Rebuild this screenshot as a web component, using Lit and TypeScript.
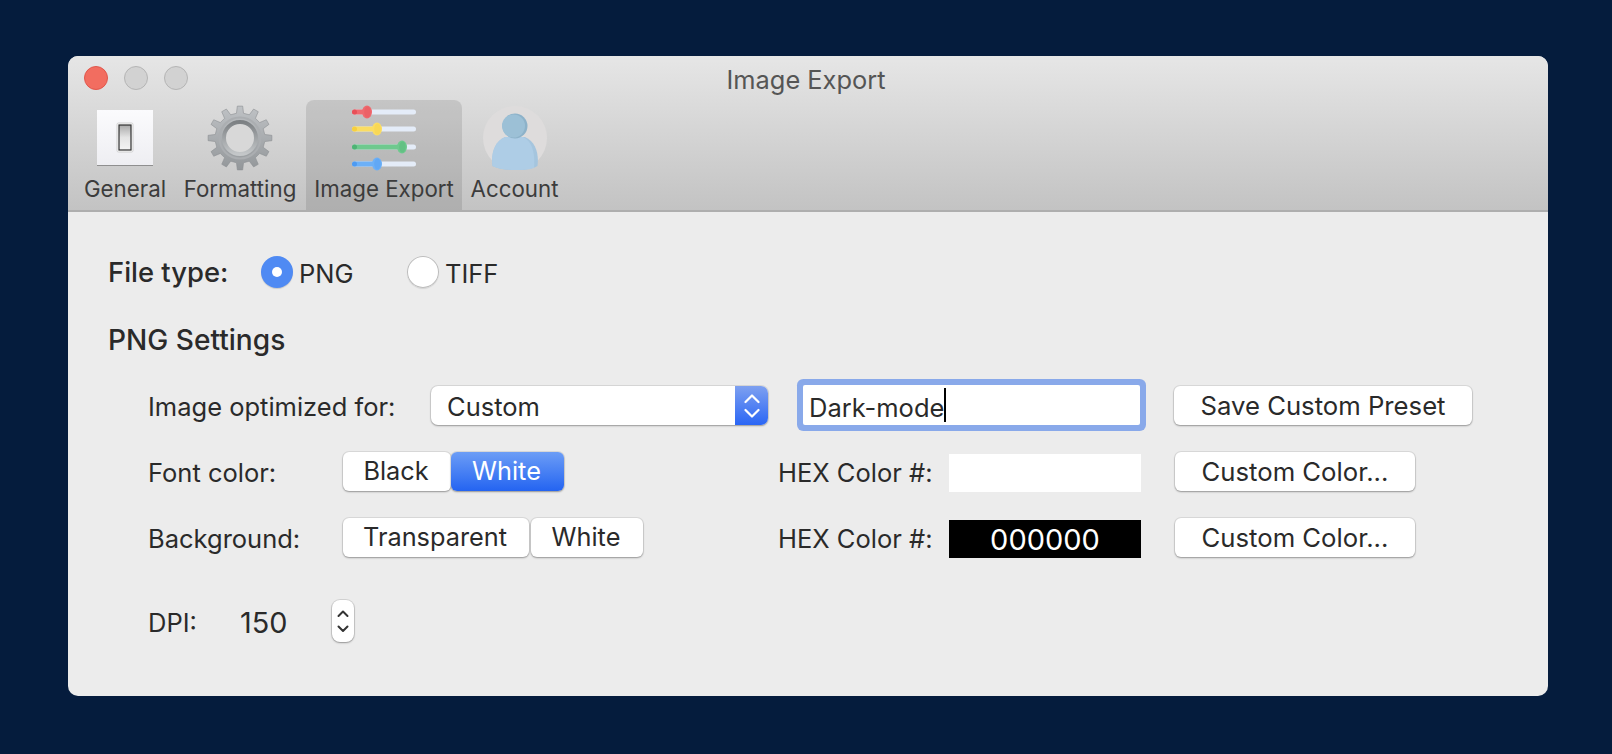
import { LitElement, html, css, svg } from "lit";
import { customElement } from "lit/decorators.js";

function gearPath(): string {
  const cx = 40, cy = 40, teeth = 12, ro = 32, ri = 25;
  const step = (Math.PI * 2) / teeth;
  const pts: string[] = [];
  for (let i = 0; i < teeth; i++) {
    const a = i * step - Math.PI / 2;
    const p = (r: number, d: number) => `${(cx + r * Math.cos(a + d)).toFixed(2)} ${(cy + r * Math.sin(a + d)).toFixed(2)}`;
    pts.push(`${i === 0 ? "M" : "L"}${p(ri, -step * 0.27)}`);
    pts.push(`L${p(ro, -step * 0.16)}`);
    pts.push(`L${p(ro, step * 0.16)}`);
    pts.push(`L${p(ri, step * 0.27)}`);
  }
  return pts.join(" ") + " Z";
}

const switchIcon = svg`<svg width="60" height="60" viewBox="0 0 60 60">
  <defs><linearGradient id="sw" x1="0" y1="0" x2="0" y2="1"><stop offset="0" stop-color="#fbfbfd"/><stop offset="1" stop-color="#eeeef2"/></linearGradient>
  <linearGradient id="swt" x1="0" y1="0" x2="0" y2="1"><stop offset="0" stop-color="#a9a9a9"/><stop offset=".5" stop-color="#e4e4e4"/><stop offset="1" stop-color="#f4f4f4"/></linearGradient></defs>
  <rect x="2" y="1" width="56" height="56" fill="#8f8f8f"/>
  <rect x="2" y="1" width="56" height="55" fill="url(#sw)"/>
  <rect x="22" y="14" width="16" height="29" rx="1.5" fill="#fbfbfb" stroke="#d0d0d0"/>
  <rect x="24" y="16" width="12" height="25" fill="url(#swt)" stroke="#2f2f2f" stroke-width="1.2"/>
</svg>`;

const gearIcon = svg`<svg width="68" height="68" viewBox="6 6 68 68">
  <defs><linearGradient id="g1" x1="0" y1="0" x2="0" y2="1"><stop offset="0" stop-color="#bfc2c5"/><stop offset="1" stop-color="#93979a"/></linearGradient>
  <linearGradient id="g2" x1="0" y1="0" x2="0" y2="1"><stop offset="0" stop-color="#7c8083"/><stop offset="1" stop-color="#c4c7c9"/></linearGradient></defs>
  <path d=${gearPath()} fill="url(#g1)" stroke="#8d9093" stroke-width=".6"/>
  <circle cx="40" cy="40" r="20.5" fill="none" stroke="#abaeb1" stroke-width="2"/>
  <circle cx="40" cy="40" r="16" fill="#d8d8d8" stroke="url(#g2)" stroke-width="4"/>
</svg>`;

const sliders: [number, number, string, string][] = [
  [8, 15, "#ef6a6f", "#e84f57"],
  [25, 25, "#fbdd62", "#f6cf3f"],
  [43, 50, "#6ec98e", "#4eb374"],
  [60, 25, "#6cb0f7", "#4e9bf2"],
];
const sliderIcon = svg`<svg width="66" height="68" viewBox="0 0 66 68">
  ${sliders.map(([y, k, c, d]) => svg`
    <rect x="1" y=${y - 2.5} width="64" height="5" rx="2.5" fill="#e4ecf8"/>
    <rect x="1" y=${y - 2.5} width=${k} height="5" rx="2.5" fill=${c}/>
    <rect x="1" y=${y - 2.5} width="5" height="5" rx="2.5" fill=${d}/>
    <ellipse cx=${k + 1} cy=${y} rx="5" ry="6.5" fill=${c}/>
    <ellipse cx=${k + 1.4} cy=${y} rx="3.2" ry="5.6" fill=${d} opacity=".35"/>`)}
</svg>`;

const accountIcon = svg`<svg width="64" height="64" viewBox="0 0 64 64">
  <circle cx="32" cy="32" r="32" fill="#dedcdc"/>
  <path d="M9.5 60 C8 48 11 36 22 31 L42 31 C53 36 56 48 54.5 60 C48 63.5 40 64 32 64 C24 64 15 63 9.5 60 Z" fill="#a5c5de"/>
  <path d="M9.5 60 C8 48 11 36 22 31 L40 31 C50 36 52 48 51 62 C45 64 38 64 32 64 C24 64 15 63 9.5 60 Z" fill="#aecde6"/>
  <circle cx="32" cy="20" r="12.5" fill="#8db2c9"/>
  <circle cx="30.5" cy="20" r="11.5" fill="#9cc0d6"/>
</svg>`;

const selectArrows = svg`<svg width="16" height="26" viewBox="0 0 16 26" fill="none" stroke="currentColor" stroke-width="2.2" stroke-linecap="round" stroke-linejoin="round">
  <path d="M1.5 9 L8 2.5 L14.5 9"/><path d="M1.5 17 L8 23.5 L14.5 17"/></svg>`;
const stepArrows = svg`<svg width="14" height="28" viewBox="0 0 14 28" fill="none" stroke="currentColor" stroke-width="2" stroke-linecap="round" stroke-linejoin="round">
  <path d="M2.5 9 L7 4.5 L11.5 9"/><path d="M2.5 19.5 L7 24 L11.5 19.5"/></svg>`;

@customElement("app-root")
export class AppRoot extends LitElement {
  static styles = css`
    :host { display: block; width: 1612px; height: 754px; background: #051c3d; font-family: Inter, "Liberation Sans", sans-serif; color: #2a2a2a; font-size: 25.5px; overflow: hidden; }
    * { box-sizing: border-box; }
    .stage { padding: 56px 64px 58px 68px; height: 754px; }
    .window { height: 640px; background: #ececec; border-radius: 10px; overflow: hidden; display: flex; flex-direction: column; }
    .chrome { height: 156px; background: linear-gradient(#e6e6e6, #c3c3c3); border-bottom: 2px solid #aeaeae; display: flex; flex-direction: column; flex: none; }
    .titlebar { height: 44px; display: grid; grid-template-columns: 1fr auto 1fr; align-items: center; flex: none; }
    .lights { display: flex; gap: 16px; padding-left: 16px; }
    .light { width: 24px; height: 24px; border-radius: 50%; background: #d2d2d2; border: 1px solid #b4b4b4; }
    .light.red { background: #f26d60; border-color: #e0574c; }
    .title { font-size: 25.4px; color: #555; padding-top: 2px; padding-right: 4px; }
    .tabs { display: flex; padding-left: 8px; flex: 1; align-items: stretch; }
    .tab { display: flex; flex-direction: column; align-items: center; color: #3c3c3c; font-size: 22.3px; border-radius: 8px 8px 0 0; white-space: nowrap; }
    .tab .ic { height: 72px; display: flex; align-items: center; justify-content: center; padding-top: 4px; flex: none; }
    .tab .lb { line-height: 34px; }
    .t1 { width: 98px; } .t2 { width: 132px; } .t3 { width: 156px; background: rgba(0,0,0,.1); } .t4 { width: 105px; }
    .t1 .ic { padding-top: 6px; }
    .body { flex: 1; padding: 44px 0 0 40px; }
    .filetype { display: flex; align-items: center; height: 32px; }
    .strong { font-weight: 500; font-size: 27.4px; }
    .ft-label { width: 153px; }
    .radio { width: 32px; height: 32px; border-radius: 50%; background: #fff; box-shadow: inset 0 0 0 1px #bdbdbd, 0 1px 1px rgba(0,0,0,.1); margin-right: 6px; }
    .radio.on { background: #4f8af3; box-shadow: 0 1px 1px rgba(0,0,0,.15); display: flex; align-items: center; justify-content: center; }
    .radio.on::after { content: ""; width: 10px; height: 10px; border-radius: 50%; background: #fff; }
    .opt { width: 108px; }
    .ft-text { padding-top: 2px; }
    h2.strong { margin: 0; padding-top: 38px; font-weight: 500; font-size: 28.1px; line-height: 28px; height: 66px; }
    .grid { margin-top: 31px; padding-left: 40px; display: grid; grid-template-columns: 630px auto; grid-auto-rows: 40px; row-gap: 26px; align-items: center; }
    .row { display: flex; align-items: center; height: 40px; }
    .l-wide { width: 283px; }
    .l { width: 195px; }
    .tx { padding-top: 3px; }
    .select { width: 337px; height: 39px; margin-top: 1px; background: #fff; border-radius: 7px; box-shadow: 0 0 0 1px rgba(0,0,0,.08), 0 1px 2px rgba(0,0,0,.3); display: flex; align-items: center; justify-content: space-between; padding-left: 16px; overflow: hidden; }
    .select .tx { padding-top: 1px; }
    .select .arrow { width: 33px; height: 39px; background: linear-gradient(#7ea0f0, #2a66f5); color: #fff; display: flex; align-items: center; justify-content: center; }
    .input { margin-left: 25px; width: 337px; height: 40px; background: #fff; box-shadow: 0 0 0 6px #89a9ea; border-radius: 2px; display: flex; align-items: center; padding-left: 7px; }
    .input .tx { padding-top: 4px; margin-left: -1px; }
    .caret { width: 1.5px; height: 34px; background: #000; }
    .r { display: flex; align-items: center; }
    .hex { width: 171px; }
    .sw { width: 192px; height: 38px; margin-top: 4px; background: #fff; display: flex; align-items: center; justify-content: center; font-size: 29px; }
    .sw.k { background: #000; color: #fff; }
    .btn { height: 39px; background: #fff; border-radius: 6px; box-shadow: 0 0 0 1px rgba(0,0,0,.07), 0 1px 2px rgba(0,0,0,.32); display: flex; align-items: center; justify-content: center; font-size: 25.7px; white-space: nowrap; }
    .seg .btn { font-size: 25.3px; padding-bottom: 2px; padding-right: 2px; }
    .btn.on { background: linear-gradient(#6c9df6, #2464f1); color: #fff; }
    .seg { display: flex; gap: 2px; }
    .gapr { margin-left: 34px; }
    .w-save { width: 298px; } .w-custom { width: 240px; }
    .w-black { width: 108px; } .w-white { width: 113px; } .w-trans { width: 186px; } .w-white2 { width: 112px; }
    .seg.join { gap: 0; }
    .dpi { margin-top: 43px; margin-left: 40px; display: flex; align-items: center; height: 42px; }
    .dpi .l1 { width: 92px; padding-top: 3px; }
    .dpi .v { width: 92px; font-size: 28.8px; padding-top: 3px; }
    .stepper { width: 22px; height: 42px; background: #fff; border-radius: 8px; box-shadow: 0 0 0 1px rgba(0,0,0,.1), 0 1px 2px rgba(0,0,0,.3); display: flex; align-items: center; justify-content: center; color: #333; }
  `;

  render() {
    return html`<div class="stage"><div class="window">
      <div class="chrome">
        <div class="titlebar">
          <div class="lights"><span class="light red"></span><span class="light"></span><span class="light"></span></div>
          <div class="title">Image Export</div>
          <div></div>
        </div>
        <div class="tabs">
          <div class="tab t1"><div class="ic">${switchIcon}</div><div class="lb">General</div></div>
          <div class="tab t2"><div class="ic">${gearIcon}</div><div class="lb">Formatting</div></div>
          <div class="tab t3"><div class="ic">${sliderIcon}</div><div class="lb">Image Export</div></div>
          <div class="tab t4"><div class="ic">${accountIcon}</div><div class="lb">Account</div></div>
        </div>
      </div>
      <div class="body">
        <div class="filetype">
          <span class="strong ft-label">File type:</span>
          <span class="radio on"></span><span class="opt ft-text">PNG</span>
          <span class="radio"></span><span class="ft-text">TIFF</span>
        </div>
        <h2 class="strong">PNG Settings</h2>
        <div class="grid">
          <div class="row"><span class="l-wide tx">Image optimized for:</span>
            <div class="select"><span class="tx">Custom</span><span class="arrow">${selectArrows}</span></div></div>
          <div class="r">
            <div class="input"><span class="tx">Dark-mode</span><span class="caret"></span></div>
            <div class="btn w-save gapr">Save Custom Preset</div>
          </div>
          <div class="row"><span class="l tx">Font color:</span>
            <div class="seg join"><div class="btn w-black">Black</div><div class="btn on w-white">White</div></div></div>
          <div class="r"><span class="hex tx">HEX Color #:</span><div class="sw"></div><div class="btn w-custom gapr">Custom Color...</div></div>
          <div class="row"><span class="l tx">Background:</span>
            <div class="seg"><div class="btn w-trans">Transparent</div><div class="btn w-white2">White</div></div></div>
          <div class="r"><span class="hex tx">HEX Color #:</span><div class="sw k">000000</div><div class="btn w-custom gapr">Custom Color...</div></div>
        </div>
        <div class="dpi"><span class="l1">DPI:</span><span class="v">150</span><div class="stepper">${stepArrows}</div></div>
      </div>
    </div></div>`;
  }
}
